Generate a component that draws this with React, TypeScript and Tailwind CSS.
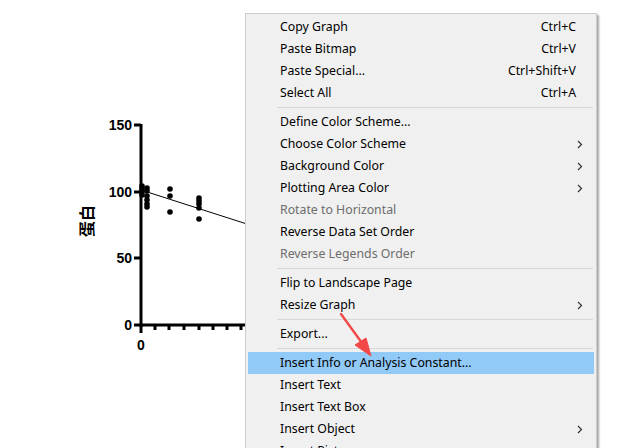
import React from "react";

type Item =
  | { sep: true }
  | { sep?: false; label: string; shortcut?: string; sub?: boolean; disabled?: boolean; active?: boolean };

const items: Item[] = [
  { label: "Copy Graph", shortcut: "Ctrl+C" },
  { label: "Paste Bitmap", shortcut: "Ctrl+V" },
  { label: "Paste Special...", shortcut: "Ctrl+Shift+V" },
  { label: "Select All", shortcut: "Ctrl+A" },
  { sep: true },
  { label: "Define Color Scheme..." },
  { label: "Choose Color Scheme", sub: true },
  { label: "Background Color", sub: true },
  { label: "Plotting Area Color", sub: true },
  { label: "Rotate to Horizontal", disabled: true },
  { label: "Reverse Data Set Order" },
  { label: "Reverse Legends Order", disabled: true },
  { sep: true },
  { label: "Flip to Landscape Page" },
  { label: "Resize Graph", sub: true },
  { sep: true },
  { label: "Export..." },
  { sep: true },
  { label: "Insert Info or Analysis Constant...", active: true },
  { label: "Insert Text" },
  { label: "Insert Text Box" },
  { label: "Insert Object", sub: true },
  { label: "Insert Picture" },
];

function Chevron() {
  return (
    <svg width="6" height="9" viewBox="0 0 6 9" className="block">
      <path d="M1 1 L4.5 4.5 L1 8" fill="none" stroke="#333" strokeWidth="1.2" />
    </svg>
  );
}

function Chart() {
  const pts: [number, number][] = [
    [142, 186], [142, 189], [142, 192], [142, 195],
    [147, 188], [147, 191], [147, 196], [147, 200], [147, 204], [147, 207],
    [170, 189], [170, 196], [170, 212],
    [199, 198], [199, 201], [199, 204], [199, 208], [199, 219],
  ];
  const yticks: [number, string][] = [
    [125, "150"],
    [192, "100"],
    [258, "50"],
    [325, "0"],
  ];
  const xticks = [141, 155, 169, 184, 199, 213, 227, 241];
  return (
    <svg width="644" height="448" className="absolute left-0 top-0" style={{ fontFamily: "'Liberation Sans', Arial, sans-serif" }}>
      <line x1="141" y1="124" x2="141" y2="327" stroke="#000" strokeWidth="3" />
      <line x1="140" y1="325" x2="250" y2="325" stroke="#000" strokeWidth="3" />
      {yticks.map(([y, t]) => (
        <g key={t}>
          <line x1="134" y1={y} x2="141" y2={y} stroke="#000" strokeWidth="3" />
          <text x="132" y={y + 5} textAnchor="end" fontSize="14" fontWeight="bold" fill="#000">{t}</text>
        </g>
      ))}
      {xticks.map((x) => (
        <line key={x} x1={x} y1="325" x2={x} y2={x === 141 ? 333 : 330} stroke="#000" strokeWidth="3" />
      ))}
      <text x="141" y="350" textAnchor="middle" fontSize="14" fontWeight="bold" fill="#000">0</text>
      <line x1="141" y1="190" x2="250" y2="225" stroke="#000" strokeWidth="1" />
      {pts.map(([x, y], i) => (
        <circle key={i} cx={x} cy={y} r="2.8" fill="#000" />
      ))}
      <text
        x="0"
        y="0"
        transform="translate(93 221) rotate(-90)"
        textAnchor="middle"
        fontSize="16"
        fontWeight="bold"
        fill="#000"
        style={{ fontFamily: "'Noto Sans CJK SC', sans-serif" }}
      >
        蛋白
      </text>
    </svg>
  );
}

function Arrow() {
  return (
    <svg width="644" height="448" className="pointer-events-none absolute left-0 top-0">
      <line x1="341" y1="314" x2="362" y2="343" stroke="#f24848" strokeWidth="2.4" strokeLinecap="round" />
      <path d="M371 356 L355 345 L366 338 Z" fill="#f24848" stroke="#f24848" strokeWidth="1" strokeLinejoin="round" />
    </svg>
  );
}

export default function App() {
  return (
    <div className="relative h-[448px] w-[644px] overflow-hidden bg-white">
      <Chart />
      <div
        className="absolute left-[245px] top-[13px] w-[352px] border border-[#cccccc] bg-[#f0f0f0] pt-[2px] pb-[1px] shadow-[2px_2px_2px_rgba(0,0,0,0.35)]"
        style={{ fontFamily: "'Noto Sans', 'Noto Sans CJK SC', sans-serif" }}
      >
        <div className="flex flex-col px-[2px]">
          {items.map((it, i) =>
            it.sep ? (
              <div key={i} className="flex h-[7px] items-center pl-[29px] pr-[1px]">
                <div className="h-px w-full bg-[#d7d7d7]" />
              </div>
            ) : (
              <div
                key={i}
                className={`flex h-[22px] items-center pl-[32px] pr-[10px] text-[12.3px] ${
                  it.active ? "bg-[#91c9f7]" : ""
                } ${it.disabled ? "text-[#6d6d6d]" : "text-black"}`}
              >
                <span className="flex-1 whitespace-nowrap">{it.label}</span>
                {it.shortcut && <span className="mr-[8px] whitespace-nowrap">{it.shortcut}</span>}
                {it.sub && (
                  <span className="mr-[1px]">
                    <Chevron />
                  </span>
                )}
              </div>
            )
          )}
        </div>
      </div>
      <Arrow />
    </div>
  );
}
